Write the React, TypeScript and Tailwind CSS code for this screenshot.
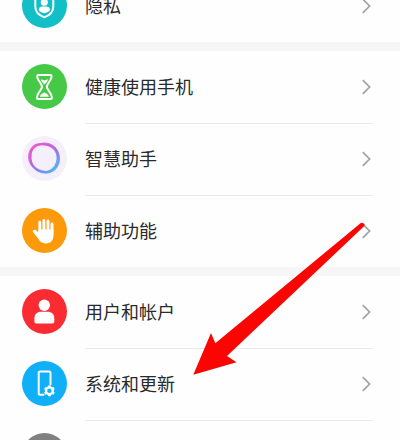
import type { ReactNode } from 'react';

function PrivacyIcon() {
  return (
    <svg viewBox="0 0 45 45" className="size-[45px]">
      <path d="M22.3 9 L31.3 12.5 V23.5 C31.3 29 27.5 32.4 22.3 34.2 C17.1 32.4 13.3 29 13.3 23.5 V12.5 Z" fill="none" stroke="#fff" strokeWidth="2" strokeLinejoin="round" />
      <circle cx="22.3" cy="19.3" r="3.5" fill="#fff" />
      <path d="M16.7 27 C16.7 24.2 18.5 23.4 20.5 23.4 H24.2 C26.2 23.4 28 24.2 28 27 C26.6 28.8 24.5 30 22.3 30.2 C20 30 18 28.8 16.7 27 Z" fill="#fff" />
    </svg>
  );
}

function HourglassIcon() {
  return (
    <svg viewBox="0 0 45 45" className="size-[45px]" fill="none" stroke="#fff" strokeLinejoin="round" strokeLinecap="round">
      <path d="M16.2 10.9 H28.6 C29.9 10.9 29.7 12.6 29.1 14.3 C28.1 17.6 24.8 20.3 24.8 22.8 C24.8 25.3 28.3 27.8 29.3 31.3 C29.9 33.2 30.3 35 28.8 35 H16 C14.5 35 14.9 33.2 15.5 31.3 C16.5 27.8 20 25.3 20 22.8 C20 20.3 16.7 17.6 15.7 14.3 C15.1 12.6 14.9 10.9 16.2 10.9 Z" strokeWidth="2" />
      <path d="M18.8 15.6 C20.3 14.8 21.3 16.4 22.4 16.4 C23.5 16.4 24.5 14.8 26 15.6 C25.6 17.4 23.8 19.3 22.4 20.4 C21 19.3 19.2 17.4 18.8 15.6 Z" fill="#fff" stroke="none" />
      <path d="M18 32.8 C18.4 29.8 20.6 29.4 22.4 28.4 C24.2 29.4 26.4 29.8 26.8 32.8 Z" fill="#fff" stroke="none" />
    </svg>
  );
}

function AssistantIcon() {
  return (
    <svg viewBox="0 0 45 45" className="size-[45px]" fill="none">
      <defs>
        <linearGradient id="ring" x1="12" y1="9" x2="33" y2="36" gradientUnits="userSpaceOnUse">
          <stop offset="0" stopColor="#e852cb" />
          <stop offset="0.35" stopColor="#c65bdc" />
          <stop offset="0.65" stopColor="#7a80ea" />
          <stop offset="1" stopColor="#3eb8f0" />
        </linearGradient>
      </defs>
      <g stroke="url(#ring)" strokeOpacity=".8">
        <path d="M12.5 9.5 C16 6.8 19.5 8 24 8.6 C30 9.5 34.5 13 36 18 C37.8 24 36.5 30 32 34 C27.5 37.5 20.5 37.5 15.5 34.5 C11 31.5 7.2 27 7 21.5 C6.9 16.5 9 12.2 12.5 9.5 Z" strokeWidth="2" />
        <path d="M22 7.5 C28.5 7.3 33 11 35.5 16 C37.8 21 37 27.5 33 32 C29 36.2 23 36.7 17.5 34.5 C12 32.4 8.8 28 8.3 22.5 C7.7 16 9.5 12.5 14 10 C16.7 8.5 19 7.6 22 7.5 Z" strokeWidth="2" />
        <path d="M16 8.8 C22 7.8 28.5 9 32.5 13.5 C36.5 18.5 36 25.5 32.8 30.5 C29.5 35.5 23 37.2 17 35 C11.5 33 9.5 28.5 8.7 23 C8 17 10 10.5 16 8.8 Z" strokeWidth="1.6" />
      </g>
    </svg>
  );
}

function HandIcon() {
  return (
    <svg viewBox="0 0 45 45" className="size-[45px]">
      <path d="M17.8 14.2 V25 M21.9 12.4 V25 M26 13 V25 M30 16 V26" stroke="#fff" strokeWidth="2.9" strokeLinecap="round" />
      <path d="M16.35 21.5 H31.45 V27 C31.4 32.5 28.8 35.4 24 35.4 C20 35.4 18.2 34 16.3 30.8 L11 24 C9.8 22.2 12.3 20.9 13.7 22.1 L16.35 24.5 Z" fill="#fff" />
    </svg>
  );
}

function UserIcon() {
  return (
    <svg viewBox="0 0 45 45" className="size-[45px]" fill="#fff">
      <circle cx="22.3" cy="16.2" r="5.7" />
      <path d="M12.4 32.5 V29.5 C12.4 25 15.3 22.8 19 22.8 H25.7 C29.4 22.8 32.3 25 32.3 29.5 V32.5 C32.3 33.8 31.7 34.4 30.4 34.4 H14.3 C13 34.4 12.4 33.8 12.4 32.5 Z" />
    </svg>
  );
}

function UpdateIcon() {
  return (
    <svg viewBox="0 0 45 45" className="size-[45px]" fill="none" stroke="#fff">
      <path d="M21.5 33.7 H18.2 Q16.7 33.7 16.7 32.2 V12 Q16.7 10.5 18.2 10.5 H27 Q28.5 10.5 28.5 12 V23.5" strokeWidth="2" strokeLinecap="round" />
      <circle cx="27.4" cy="29.8" r="3.4" strokeWidth="2.3" />
      <path d="M27.4 24.4 V26 M27.4 33.6 V35.2 M22.7 27.1 L24.1 27.9 M30.7 31.7 L32.1 32.5 M22.7 32.5 L24.1 31.7 M30.7 27.9 L32.1 27.1" strokeWidth="2.8" />
    </svg>
  );
}

function Row({ label, color, icon, divider = false }: { label: string; color: string; icon?: ReactNode; divider?: boolean }) {
  return (
    <div className="flex h-[72px] shrink-0 pl-[22px] pr-[27px]">
      <div className={`mt-[13px] size-[45px] shrink-0 overflow-hidden rounded-full ${color}`}>{icon}</div>
      <div className={`ml-[18px] flex h-[73px] flex-1 items-center justify-between border-b pb-px pr-[2px] ${divider ? 'border-[#e9e9e9]' : 'border-transparent'}`}>
        <span className="pb-[2px] text-[18px] leading-6 text-[#2a2a2a]">{label}</span>
        <svg viewBox="0 0 10 16" className="h-4 w-2.5" fill="none" stroke="#a2a2a2" strokeWidth="1.7">
          <path d="M1.8 1.2 L8.6 8 L1.8 14.8" />
        </svg>
      </div>
    </div>
  );
}

function Gap() {
  return <div className="h-[9px] shrink-0 bg-[#f6f6f6]" />;
}

export default function App() {
  return (
    <div className="relative h-[440px] w-[400px] overflow-hidden bg-[#fefefe] font-['Noto_Sans_CJK_SC',sans-serif]">
      <div className="-mt-[30px] flex flex-col">
        <Row label="隐私" color="bg-[#13bfc6]" icon={<PrivacyIcon />} />
        <Gap />
        <Row label="健康使用手机" color="bg-[#46c946]" icon={<HourglassIcon />} divider />
        <Row label="智慧助手" color="bg-[#f5effc]" icon={<AssistantIcon />} divider />
        <Row label="辅助功能" color="bg-[#fd9a0a]" icon={<HandIcon />} />
        <Gap />
        <Row label="用户和帐户" color="bg-[#fb2b32]" icon={<UserIcon />} divider />
        <Row label="系统和更新" color="bg-[#10b0f8]" icon={<UpdateIcon />} divider />
        <Row label="" color="bg-[#808080]" />
      </div>
      <svg viewBox="0 0 400 440" className="pointer-events-none absolute inset-0 h-[440px] w-[400px]">
        <path d="M193.3 374.8 L211 333 L215.3 343.3 L360.8 222.9 Q363 222 364.5 224.2 Q364.8 225.6 363.8 226.5 L227 356 L236.5 362.3 Z" fill="#fa0502" />
      </svg>
    </div>
  );
}
